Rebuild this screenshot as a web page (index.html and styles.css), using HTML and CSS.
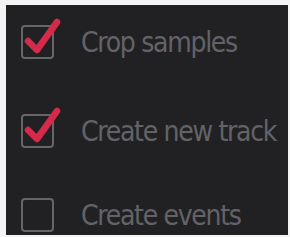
FILE: index.html
```html
<!DOCTYPE html>
<html lang="en">
<head>
  <meta charset="UTF-8">
  <title>Options</title>
  <link rel="stylesheet" href="styles.css">
</head>
<body>
<div class="panel">
  <label class="option">
    <span class="box">
      <svg class="tick" viewBox="0 0 44 44"><path d="M7 24 L16 33 L36 5"/></svg>
    </span>
    <span class="label">Crop samples</span>
  </label>
  <label class="option">
    <span class="box">
      <svg class="tick" viewBox="0 0 44 44"><path d="M7 24 L16 33 L36 5"/></svg>
    </span>
    <span class="label">Create new track</span>
  </label>
  <label class="option">
    <span class="box"></span>
    <span class="label">Create events</span>
  </label>
</div>
</body>
</html>
```

FILE: styles.css
```css
html, body {
  margin: 0;
  padding: 0;
  background: #f4f4f4;
}
body {
  padding: 5px 2px 2px 6px;
  height: 237px;
  box-sizing: border-box;
}
.panel {
  background: #212124;
  height: 100%;
  padding: 20px 0 0 15px;
  box-sizing: border-box;
  display: flex;
  flex-direction: column;
  font-family: "DejaVu Sans Condensed", "DejaVu Sans", sans-serif;
}
.option {
  display: flex;
  align-items: center;
  gap: 27px;
  height: 34px;
}
.option:nth-child(1) {
  margin-bottom: 55px;
}
.option:nth-child(2) {
  margin-bottom: 50px;
}
.box {
  position: relative;
  width: 29px;
  height: 30px;
  border: 2px solid #66666a;
  border-radius: 4px;
  flex: none;
}
.tick {
  position: absolute;
  left: -2px;
  top: -10px;
  width: 44px;
  height: 44px;
}
.tick path {
  fill: none;
  stroke: #d62a4b;
  stroke-width: 6.5;
  stroke-linecap: round;
  stroke-linejoin: round;
}
.label {
  color: #636367;
  font-size: 28px;
  letter-spacing: -1.3px;
}
```
